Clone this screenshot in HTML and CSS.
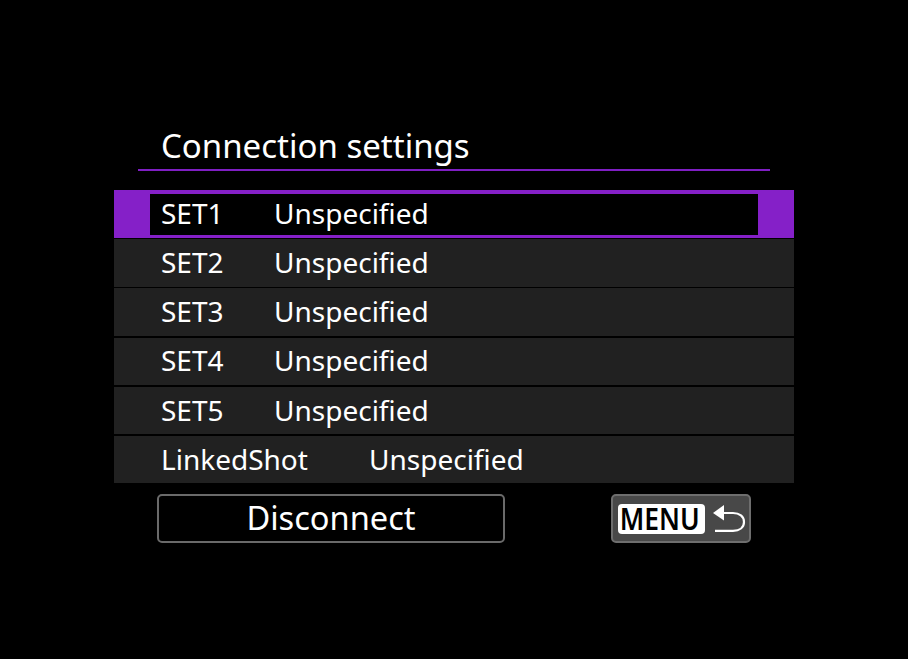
FILE: index.html
```html
<!DOCTYPE html>
<html lang="en">
<head>
<meta charset="utf-8">
<title>Connection settings</title>
<link rel="stylesheet" href="styles.css">
</head>
<body>
<main class="screen">
  <h1 class="title">Connection settings</h1>
  <ul class="list">
    <li class="row row-selected"><div class="row-inner"><span class="set">SET1</span><span>Unspecified</span></div></li>
    <li class="row"><div class="row-inner"><span class="set">SET2</span><span>Unspecified</span></div></li>
    <li class="row"><div class="row-inner"><span class="set">SET3</span><span>Unspecified</span></div></li>
    <li class="row"><div class="row-inner"><span class="set">SET4</span><span>Unspecified</span></div></li>
    <li class="row"><div class="row-inner"><span class="set">SET5</span><span>Unspecified</span></div></li>
    <li class="row"><div class="row-inner"><span class="set set-wide">LinkedShot</span><span>Unspecified</span></div></li>
  </ul>
  <div class="actions">
    <button class="disconnect">Disconnect</button>
    <button class="menu-btn">
      <span class="menu-label"><span class="menu-text">MENU</span></span>
      <svg class="back-icon" viewBox="0 0 34 30" width="34" height="30" aria-hidden="true">
        <path class="back-head" d="M1 9 L12 1 V16.5 Z"/>
        <path class="back-line" d="M11 9 H21 C27.5 9 32 12.5 32 18 C32 23.5 27.5 26.8 21 26.8 H3"/>
      </svg>
    </button>
  </div>
</main>
</body>
</html>
```
FILE: styles.css
```css
* { box-sizing: border-box; }
html, body { margin: 0; padding: 0; background: #000; }
body { width: 908px; height: 659px; overflow: hidden; font-family: "Noto Sans", "Open Sans", sans-serif; color: #fff; }
.screen { padding: 124px 114px 0; width: 908px; }
.title {
  margin: 0 24px;
  height: 47px;
  padding: 0 0 0 23px;
  border-bottom: 2px solid #7f1fc4;
  font-size: 33px;
  font-weight: 400;
  line-height: 44px;
  width: 632px;
}
.list { list-style: none; margin: 19px 0 0; padding: 0; display: flex; flex-direction: column; gap: 1.7px; }
.row { height: 47.5px; background: #212121; font-size: 28px; }
.row-inner { height: 100%; padding: 0 0 2px 47px; display: flex; align-items: center; line-height: 44px; }
.set { width: 113px; }
.set-wide { width: 208px; }
.row-selected { background: #8520c8; padding: 4px 36px 3px 35.5px; }
.row-selected .row-inner { background: #000; padding-left: 11.5px; }
.actions { display: flex; align-items: flex-start; margin-top: 11px; padding-left: 43px; }
button { font-family: inherit; color: #fff; padding: 0; margin: 0; }
.disconnect {
  width: 348px; height: 49px;
  background: #000;
  border: 2px solid #6a6a6a;
  border-radius: 5px;
  font-size: 32.6px;
  line-height: 42px;
  padding-bottom: 1px;
}
.menu-btn {
  margin-left: 106px;
  width: 140px; height: 49px;
  background: #484848;
  border: 2px solid #6e6e6e;
  border-radius: 5px;
  display: flex; align-items: center;
  padding-left: 5px;
}
.menu-label {
  width: 87px; height: 30px;
  background: #fff; color: #000;
  border-radius: 4px;
  display: flex; justify-content: center;
  font-size: 30px; font-weight: 600;
  line-height: 30px;
}
.menu-text { display: inline-block; transform: scaleX(0.88) translateX(-2px); }
.back-icon { margin-left: 7px; }
.back-head { fill: #fff; }
.back-line { fill: none; stroke: #fff; stroke-width: 2.2; }
```
